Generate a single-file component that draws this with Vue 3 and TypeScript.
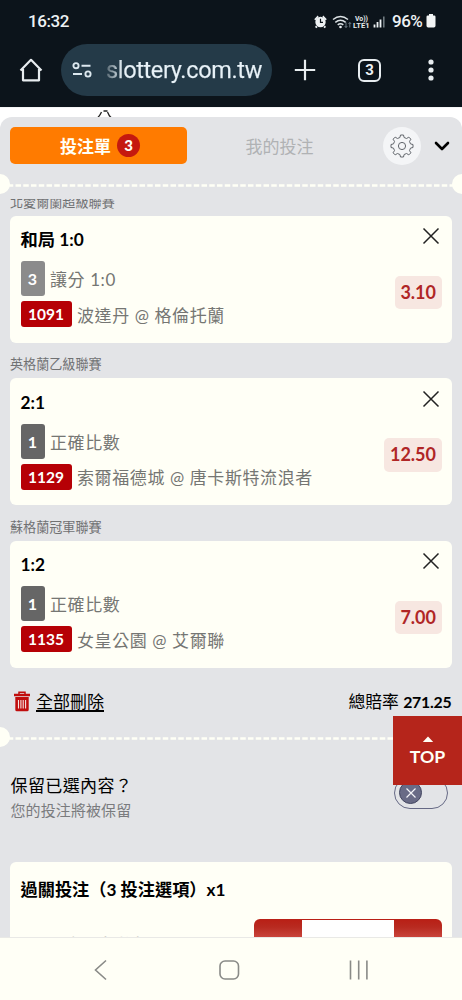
<script setup lang="ts">
interface Bet {
  league: string
  pick: string
  badge: string
  muted: boolean
  market: string
  code: string
  match: string
  odds: string
}

const bets: Bet[] = [
  { league: '北愛爾蘭超級聯賽', pick: '和局 1:0', badge: '3', muted: true, market: '讓分 1:0', code: '1091', match: '波達丹 @ 格倫托蘭', odds: '3.10' },
  { league: '英格蘭乙級聯賽', pick: '2:1', badge: '1', muted: false, market: '正確比數', code: '1129', match: '索爾福德城 @ 唐卡斯特流浪者', odds: '12.50' },
  { league: '蘇格蘭冠軍聯賽', pick: '1:2', badge: '1', muted: false, market: '正確比數', code: '1135', match: '女皇公園 @ 艾爾聯', odds: '7.00' },
]
</script>

<template>
  <div class="phone">
    <header class="chrome">
      <div class="status">
        <span class="time">16:32</span>
        <svg class="status-icons" width="74" height="18" viewBox="0 0 74 18">
          <g fill="#eef2f4">
            <circle cx="7.500" cy="9" r="5.200" />
            <path d="M1.200 6.200 4.700 2.600l1 1.300-3.300 3.400zM13.800 6.200 10.300 2.600l-1 1.300 3.300 3.400zM3 12.500l1.600 1.500-1.200 1.200L2 14zM12 12.500l-1.600 1.500 1.200 1.200L13 14z" />
          </g>
          <path d="M7.500 5.800v3.600H10" fill="none" stroke="#0d151c" stroke-width="1.200" />
          <g fill="none" stroke="#dde3e6" stroke-width="1.500">
            <path d="M20 6.500q7.500-6 15 0M22.300 9.300q5.200-4.200 10.400 0M24.700 11.900q2.800-2.200 5.600 0" />
          </g>
          <circle cx="27.500" cy="14" r="1.300" fill="#eef2f4" />
          <path d="M33 9.500v5m-1.300-1.400 1.300 1.400 1.300-1.400M36.800 14.500v-5m-1.300 1.400 1.300-1.400 1.300 1.400" fill="none" stroke="#829099" stroke-width=".8" />
          <text x="42" y="7.800" class="lte" textLength="13" lengthAdjust="spacingAndGlyphs">Vo))</text>
          <text x="40" y="15" class="lte" textLength="16.500" lengthAdjust="spacingAndGlyphs">LTE1</text>
          <path d="M61.500 14.500v-3M64.500 14.500V9" stroke="#eef2f4" stroke-width="1.800" />
          <path d="M67.500 14.500V6.500" stroke="#eef2f4" stroke-width="1.800" />
          <path d="M70.800 14.500V3.500" stroke="#707a80" stroke-width="1.600" />
        </svg>
        <span class="percent">96%</span>
        <svg class="battery" width="10" height="14" viewBox="0 0 10 14"><path d="M3 0h4v1.500h1.200q1.300 0 1.300 1.300v9q0 1.700-1.700 1.700H2.200Q.5 13.500.5 11.800v-9Q.5 1.500 1.800 1.500H3z" fill="#f3f5f6" /></svg>
      </div>
      <div class="toolbar">
        <svg class="home" width="26" height="26" viewBox="0 0 26 26"><path d="M5 12v11.300h16V12M2.500 13.500 13 2.800l10.500 10.700" fill="none" stroke="#e8edf0" stroke-width="2.200" stroke-linejoin="round" /></svg>
        <div class="url">
          <svg width="20" height="18" viewBox="0 0 20 18"><g fill="none" stroke="#dce8ef" stroke-width="1.900"><circle cx="4" cy="4.700" r="2.600" /><path d="M9.500 4.700h9M1 13h9" /><circle cx="16" cy="13" r="2.600" /></g></svg>
          <span class="address">slottery.com.tw</span>
        </div>
        <svg class="plus" width="22" height="22" viewBox="0 0 22 22"><path d="M11 .8v20.400M.8 11h20.400" stroke="#e8edf0" stroke-width="2.200" /></svg>
        <div class="tabs-count">3</div>
        <svg class="dots" width="6" height="22" viewBox="0 0 6 22"><g fill="#e8edf0"><circle cx="3" cy="3" r="2.600" /><circle cx="3" cy="11" r="2.600" /><circle cx="3" cy="19" r="2.600" /></g></svg>
      </div>
    </header>

    <div class="page-peek">
      <svg width="18" height="8" viewBox="0 0 18 8"><path d="M6.500 2Q5 5.500 2.500 8M8.500 1h4M12.500 2q1.500 4 4 6" fill="none" stroke="#222" stroke-width="1.300" /></svg>
    </div>

    <main class="sheet">
      <div class="tabs">
        <div class="tab active">投注單<b>3</b></div>
        <div class="tab">我的投注</div>
        <div class="gear">
          <svg width="26" height="26" viewBox="0 0 26 26" fill="none" stroke="#61656b" stroke-width="1" stroke-linejoin="round">
            <path d="M10.900 4.500 11.500 2h3l.6 2.500 2.500 1 2.200-1.400 2.100 2.100-1.400 2.200 1 2.500 2.500.6v3l-2.500.6-1 2.500 1.400 2.200-2.100 2.100-2.200-1.400-2.500 1-.6 2.500h-3l-.6-2.500-2.500-1-2.200 1.400-2.100-2.100 1.400-2.200-1-2.500L2 14.500v-3l2.500-.6 1-2.500-1.400-2.200 2.100-2.100 2.200 1.400z" />
            <circle cx="13" cy="13" r="3.600" />
          </svg>
        </div>
        <svg class="chevron" width="16" height="10" viewBox="0 0 16 10"><path d="m2 2 6 6 6-6" fill="none" stroke="#000" stroke-width="2.600" stroke-linecap="round" stroke-linejoin="round" /></svg>
      </div>

      <div class="tear"><i></i><svg width="462" height="3"><path d="M0 1.500h462" stroke="#fffff6" stroke-width="2.600" stroke-dasharray="5.500 2.250" /></svg><i></i></div>

      <section class="bets">
        <article v-for="bet in bets" :key="bet.code" class="bet">
          <h3 class="league">{{ bet.league }}</h3>
          <div class="card">
            <div class="pick">{{ bet.pick }}</div>
            <div class="market"><span class="badge" :class="{ muted: bet.muted }">{{ bet.badge }}</span>{{ bet.market }}</div>
            <div class="match"><span class="code">{{ bet.code }}</span>{{ bet.match }}</div>
            <svg class="close" width="18" height="18" viewBox="0 0 18 18"><path d="m1.500 1.500 15 15m0-15-15 15" stroke="#222" stroke-width="1.500" /></svg>
            <div class="odds">{{ bet.odds }}</div>
          </div>
        </article>
      </section>

      <div class="summary">
        <svg width="18" height="21" viewBox="0 0 18 21"><path d="M6 3V1.300h6V3" fill="none" stroke="#c00d0d" stroke-width="1.500" /><path d="M1 2.700h16v2.500H1zM2.300 6h13.400v12.700q0 1.600-1.600 1.600H3.900q-1.600 0-1.600-1.600z" fill="#c00d0d" /><path d="M5.500 9v8.500M7.900 9v8.500M10.200 9v8.500M12.600 9v8.500" stroke="#f5e4e3" stroke-width="1.100" /></svg>
        <span class="clear">全部刪除</span>
        <span class="total">總賠率 <b>271.25</b></span>
      </div>

      <div class="tear"><i></i><svg width="462" height="3"><path d="M0 1.500h462" stroke="#fffff6" stroke-width="2.600" stroke-dasharray="5.500 2.250" /></svg><i></i></div>

      <section class="keep">
        <div>
          <div class="keep-title">保留已選內容？</div>
          <div class="keep-note">您的投注將被保留</div>
        </div>
        <div class="switch"><span><svg width="12" height="12" viewBox="0 0 12 12"><path d="m1.500 1.500 9 9m0-9-9 9" stroke="#f4f4f8" stroke-width="1.200" /></svg></span></div>
      </section>

      <section class="parlay">
        <div class="parlay-title">過關投注（3 投注選項）x1</div>
        <div class="parlay-row">
          <div class="hint">最高可贏彩金</div>
          <div class="stepper"><div></div></div>
        </div>
      </section>
    </main>

    <div class="top-button">
      <svg width="12" height="6" viewBox="0 0 12 6"><path d="M.8 6 6 .5 11.200 6z" fill="#fffff6" /></svg>
      <span>TOP</span>
    </div>

    <nav class="android">
      <svg width="462" height="62" viewBox="0 0 462 62" fill="none" stroke="#898a87" stroke-width="1.600">
        <path d="M106 22.500 95.500 32 106 41.500" />
        <rect x="220" y="23" width="18.500" height="18" rx="5" />
        <path d="M350.500 22.500v19M358.700 22.500v19M366.900 22.500v19" />
      </svg>
    </nav>
  </div>
</template>

<style>
html, body { margin: 0; overflow: hidden; }
</style>

<style scoped>
* { box-sizing: border-box; }
.phone { position: relative; width: 462px; height: 1000px; overflow: hidden; display: flex; flex-direction: column; background: #fff; font-family: Lato, "Noto Sans CJK TC", sans-serif; color: #000; }
.chrome { height: 107px; flex: none; background: #0c141b; color: #eef2f4; font-family: Roboto, sans-serif; }
.status { height: 42px; display: flex; align-items: center; padding-left: 28px; }
.time { width: 285px; font-size: 17px; font-weight: 500; letter-spacing: -.4px; line-height: 42px; }
.status-icons { flex: none; margin-top: 2px; }
.lte { fill: #e6eaec; font: 700 8px Roboto, sans-serif; }
.percent { margin-left: 5px; width: 33px; font-size: 17px; font-weight: 500; letter-spacing: -.5px; }
.battery { margin-left: 1px; }
.toolbar { height: 65px; display: flex; align-items: flex-start; padding: 2px 0 0 18px; }
.home { margin-top: 13px; }
.url { width: 211px; height: 52px; margin-left: 17px; border-radius: 26px; background: #243a48; display: flex; align-items: center; padding-left: 11px; color: #e6f1f7; }
.address { margin-left: 14px; width: 160px; font: 400 23.500px Roboto, sans-serif; letter-spacing: -.35px; white-space: nowrap; background: linear-gradient(90deg, #52636d 0, #d5e1e8 14px, #e8f2f8 20px); background-clip: text; -webkit-background-clip: text; color: transparent; -webkit-text-stroke: .25px transparent; }
.plus { margin: 15px 0 0 22px; }
.tabs-count { width: 23px; height: 23px; margin: 15px 0 0 42px; border: 2.200px solid #e8edf0; border-radius: 6px; text-align: center; font: 700 15px/19px Roboto, sans-serif; }
.dots { margin: 15px 0 0 47px; }
.page-peek { height: 18px; flex: none; padding-left: 95px; display: flex; border-top: 1px solid #f4f5f5; padding-top: 2px; }
.sheet { height: 821px; flex: none; margin-top: -8px; position: relative; background: #e3e4e7; border-radius: 12px 12px 0 0; overflow: hidden; }
.tabs { height: 57px; padding: 10px 0 0 10px; display: flex; align-items: flex-start; }
.tab { width: 185px; height: 37px; display: flex; align-items: center; justify-content: center; font-size: 17px; color: #b0b2b4; }
.tab.active { width: 177px; border-radius: 5px; background: #ff7b00; color: #fffff6; font-weight: 700; padding-left: 3px; }
.tab b { width: 23px; height: 23px; margin-left: 6px; border-radius: 50%; background: #c5190f; text-align: center; font-size: 15px; line-height: 22px; }
.gear { width: 38px; height: 38px; margin-left: 11px; border-radius: 50%; background: #f4f5f7; display: flex; align-items: center; justify-content: center; }
.chevron { margin: 14px 0 0 13px; }
.tear { position: relative; height: 20px; overflow: hidden; display: flex; align-items: center; }
.tear > svg { flex: none; margin-top: 2px; }
.tear i { position: absolute; top: 0; left: -10px; width: 20px; height: 20px; border-radius: 50%; background: #fffff6; }
.tear i:last-child { left: 452px; }
.bets { height: 468.500px; margin-top: 5px; padding: 0 10px; overflow: hidden; display: flex; flex-direction: column; justify-content: flex-end; }
.bet { flex: none; height: 162.500px; }
.league { height: 35.500px; margin: 0; padding-top: 11.500px; font-size: 13.100px; line-height: 20px; font-weight: 400; color: #707173; }
.card { position: relative; height: 127px; border-radius: 6px; background: #fffff6; padding: 13.500px 10.500px 0; color: #757673; font-size: 17px; letter-spacing: .6px; }
.pick { height: 22px; line-height: 22px; font-size: 17.300px; font-weight: 700; color: #000; letter-spacing: 0; }
.market { height: 35px; margin-top: 10px; display: flex; align-items: center; }
.badge { width: 24.500px; height: 35px; margin-right: 5px; border-radius: 3px; background: #666; color: #fff; font-size: 16px; font-weight: 700; line-height: 35px; text-align: center; }
.badge.muted { background: #8b8b8b; }
.match { height: 26px; margin-top: 5px; display: flex; align-items: center; white-space: nowrap; }
.code { width: 51px; height: 26px; margin-right: 5.500px; border-radius: 3px; background: #b60005; color: #fff; font-size: 15.500px; font-weight: 700; letter-spacing: 0; text-align: center; line-height: 26px; }
.close { position: absolute; right: 12.500px; top: 11.500px; }
.odds { position: absolute; right: 10.500px; top: 60px; height: 33.500px; padding: 0 5.500px; border-radius: 5px; background: #f7e7e1; color: #b02626; font-size: 18px; font-weight: 700; line-height: 33px; letter-spacing: 0; }
.summary { height: 59.500px; padding: 19.500px 10.500px 0 13px; display: flex; align-items: flex-start; font-size: 17px; line-height: 28px; }
.summary > svg { margin-top: 4px; }
.summary .clear { margin-left: 5px; margin-top: 1px; text-decoration: underline; text-decoration-thickness: 1.500px; text-underline-offset: 2px; }
.total { margin: 1px 0 0 auto; font-size: 16.800px; }
.total b { font-size: 15.800px; letter-spacing: -.2px; }
.keep { height: 115px; padding: 27px 14px 0 10.500px; display: flex; justify-content: space-between; }
.keep-title { font-size: 17px; line-height: 24px; letter-spacing: .4px; }
.keep-note { font-size: 15px; line-height: 24px; letter-spacing: .1px; color: #7a7b7e; }
.switch { width: 54px; height: 32px; margin: 3px 0 0; border: 1.500px solid #666985; border-radius: 16px; padding: 3px; }
.switch span { width: 23px; height: 23px; margin-left: 1px; display: flex; align-items: center; justify-content: center; border: 1px solid #434661; border-radius: 50%; background: #696b86; }
.parlay { height: 90px; margin: 0 10px; padding: 15px 10.500px 0; border-radius: 6px; background: #fffff6; }
.parlay-title { font-size: 17.200px; font-weight: 700; line-height: 25px; }
.parlay-row { display: flex; justify-content: space-between; padding-top: 17px; }
.hint { margin: 15px 0 0 29px; font-size: 16px; line-height: 20px; color: #d0d0ca; }
.stepper { width: 188px; height: 44px; padding: 1px 48px; border-radius: 6px; background: linear-gradient(#b91f15 0, #b82a20 8px, #c9443b 18px); }
.stepper div { height: 42px; background: #fff; }
.top-button { position: absolute; left: 393px; top: 716px; width: 69px; height: 69px; background: #b5251b; color: #fffff6; display: flex; flex-direction: column; align-items: center; padding-top: 20px; font-size: 17.700px; font-weight: 700; line-height: 30px; }
.top-button svg { flex: none; }
.android { position: relative; height: 62px; flex: none; background: #fffff6; box-shadow: 0 -1px #e9e9e6; }
</style>
